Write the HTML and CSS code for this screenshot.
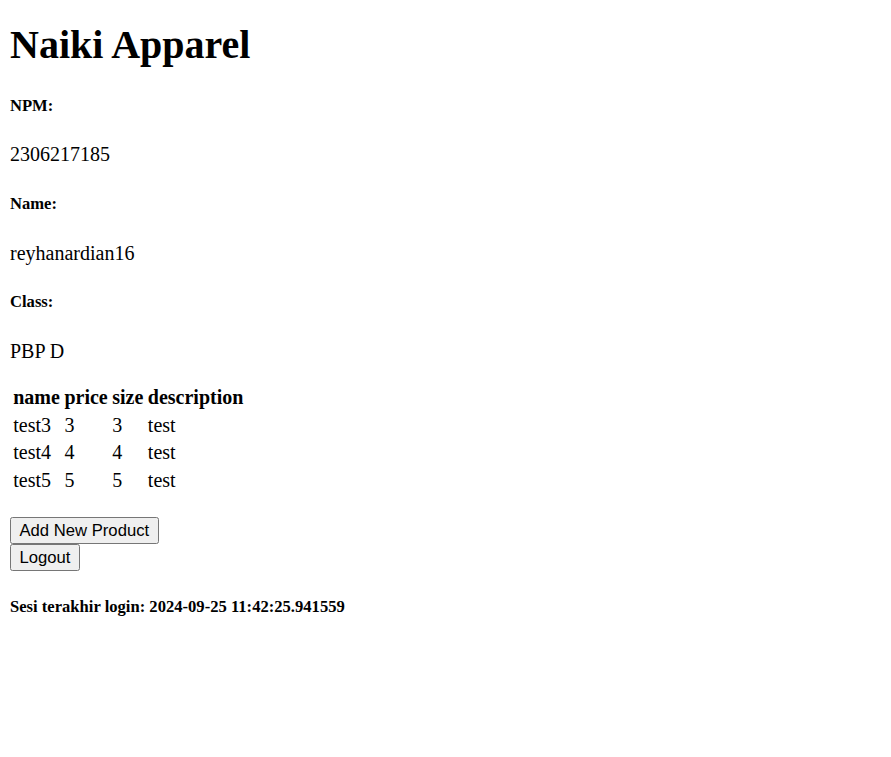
FILE: index.html
```html
<!DOCTYPE html>
<html>
<head>
<meta charset="utf-8">
<title>Naiki Apparel</title>
<link rel="stylesheet" href="styles.css">
</head>
<body class="page">
<h1 class="title">Naiki Apparel</h1>
<h5 class="label">NPM:</h5>
<p class="value">2306217185</p>
<h5 class="label">Name:</h5>
<p class="value">reyhanardian16</p>
<h5 class="label">Class:</h5>
<p class="value">PBP D</p>
<table class="products">
  <tr><th>name</th><th>price</th><th>size</th><th>description</th></tr>
  <tr><td>test3</td><td>3</td><td>3</td><td>test</td></tr>
  <tr><td>test4</td><td>4</td><td>4</td><td>test</td></tr>
  <tr><td>test5</td><td>5</td><td>5</td><td>test</td></tr>
</table>
<div class="actions">
  <div><button class="btn" type="button">Add New Product</button></div>
  <div><button class="btn" type="button">Logout</button></div>
</div>
<h5 class="label last">Sesi terakhir login: 2024-09-25 11:42:25.941559</h5>
</body>
</html>
```
FILE: styles.css
```css
html { background: #fff; }
.page {
  margin: 10px;
  font-family: "Liberation Serif", "Times New Roman", serif;
  font-size: 20px;
  color: #000;
}
.title {
  font-size: 40px;
  font-weight: bold;
  margin: 11px 0 27px;
}
.label {
  font-size: 16.6px;
  font-weight: bold;
  margin: 27.7px 0;
}
.label.last {
  margin-top: 26px;
}
.value {
  margin: 20px 0;
}
.products {
  border-spacing: 2.5px;
  margin-top: 20px;
}
.products th, .products td {
  padding: 1.25px;
  text-align: left;
}
.products th { font-weight: bold; }
.actions {
  margin-top: 22px;
}
.btn {
  font-family: "Liberation Sans", Arial, sans-serif;
  font-size: 16.67px;
  color: #000;
  background: #efefef;
  border: 1px solid #767676;
  border-radius: 2.5px;
  padding: 1px 8.5px;
  margin: 0;
  height: 27px;
}
```
